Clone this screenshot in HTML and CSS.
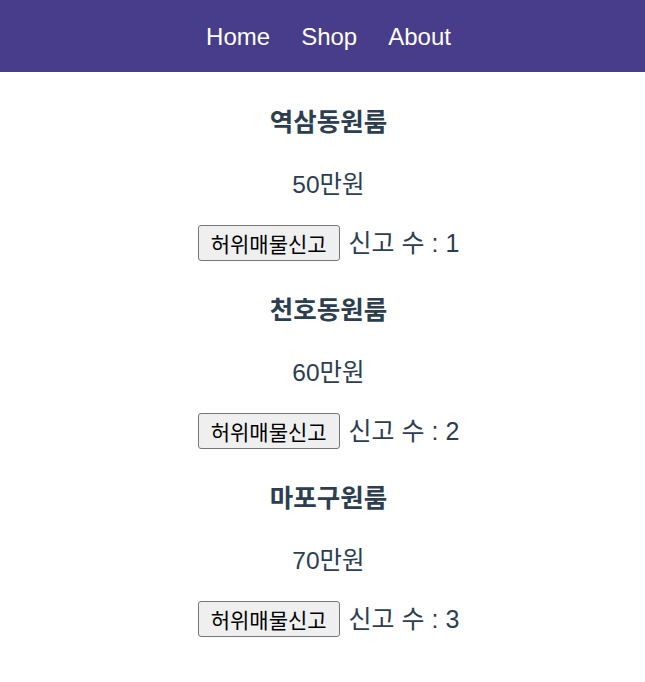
FILE: index.html
```html
<!DOCTYPE html>
<html lang="ko">
<head>
<meta charset="utf-8">
<title>원룸</title>
<link rel="stylesheet" href="styles.css">
</head>
<body>
<div class="app">
  <nav class="menu">
    <a class="menu-link" href="#">Home</a>
    <a class="menu-link" href="#">Shop</a>
    <a class="menu-link" href="#">About</a>
  </nav>
  <main class="list">
    <section class="room">
      <h4 class="room-name">역삼동원룸</h4>
      <p class="room-price">50만원</p>
      <div class="room-report">
        <button class="report-btn">허위매물신고</button>
        <span class="report-count">신고 수 : 1</span>
      </div>
    </section>
    <section class="room">
      <h4 class="room-name">천호동원룸</h4>
      <p class="room-price">60만원</p>
      <div class="room-report">
        <button class="report-btn">허위매물신고</button>
        <span class="report-count">신고 수 : 2</span>
      </div>
    </section>
    <section class="room">
      <h4 class="room-name">마포구원룸</h4>
      <p class="room-price">70만원</p>
      <div class="room-report">
        <button class="report-btn">허위매물신고</button>
        <span class="report-count">신고 수 : 3</span>
      </div>
    </section>
  </main>
</div>
</body>
</html>
```
FILE: styles.css
```css
html, body {
  margin: 0;
  padding: 0;
  background: #ffffff;
}

.app {
  font-family: "Liberation Sans", "Noto Sans CJK KR", Arial, sans-serif;
  font-size: 24px;
  color: #2c3e50;
  text-align: center;
}

.menu {
  height: 72px;
  background: #483d8b;
  display: flex;
  justify-content: center;
  align-items: center;
  gap: 31px;
  padding-left: 12px;
  padding-top: 2px;
  box-sizing: border-box;
}

.menu-link {
  color: #ffffff;
  text-decoration: none;
  font-size: 24px;
  line-height: 28px;
}

.list {
  padding-top: 36px;
  padding-left: 12px;
  display: flex;
  flex-direction: column;
  align-items: center;
  gap: 35px;
}

.room {
  display: flex;
  flex-direction: column;
  align-items: center;
}

.room-name {
  margin: 0;
  font-size: 25.5px;
  font-weight: bold;
  line-height: 28px;
}

.room-price {
  margin: 35px 0 0;
  font-size: 24.5px;
  line-height: 28px;
}

.room-report {
  margin-top: 26px;
  display: flex;
  align-items: center;
  gap: 9px;
  height: 36px;
}

.report-btn {
  font-family: "Noto Sans CJK KR", "Liberation Sans", sans-serif;
  font-size: 21px;
  line-height: 24px;
  color: #000000;
  background: #efefef;
  border: 1px solid #767676;
  border-radius: 3px;
  height: 36px;
  padding: 0 12px;
  margin: 0;
}

.report-count {
  font-size: 25px;
  line-height: 28px;
}
```
